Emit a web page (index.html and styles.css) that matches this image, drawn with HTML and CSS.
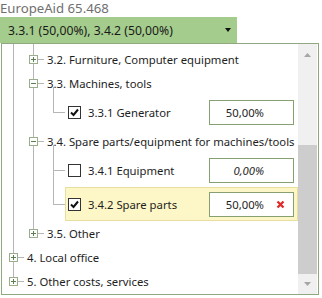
FILE: index.html
```html
<!DOCTYPE html>
<html lang="en">
<head>
  <meta charset="UTF-8">
  <title>Budget line picker</title>
  <link rel="stylesheet" href="styles.css">
</head>
<body>
  <div class="caption">EuropeAid 65.468</div>
  <div class="combo">
    <span>3.3.1 (50,00%), 3.4.2 (50,00%)</span>
    <span class="combo-arrow"></span>
  </div>

  <div class="panel">
    <div class="tree">
      <div class="branch b0">
        <div class="branch b1">
          <div class="row l1">
            <svg class="exp" width="9" height="9"><rect x=".5" y=".5" width="8" height="8"/><path d="M2 4.5h5M4.5 2v5"/></svg>
            <span class="conn"></span>
            <span>3.2. Furniture, Computer equipment</span>
          </div>
          <div class="row l1">
            <svg class="exp" width="9" height="9"><rect x=".5" y=".5" width="8" height="8"/><path d="M2 4.5h5"/></svg>
            <span class="conn"></span>
            <span>3.3. Machines, tools</span>
          </div>
          <div class="branch b2">
            <div class="leaf">
              <span class="conn2"></span>
              <div class="item">
                <span class="cb"><svg width="11" height="11"><path d="M2 5.5l2.5 2.5 4.5-5.5"/></svg></span>
                <span class="label">3.3.1 Generator</span>
                <div class="val"><span>50,00%</span><svg class="clear" width="9" height="9"><path d="M1.5 1.5l6 6M7.5 1.5l-6 6"/></svg></div>
              </div>
            </div>
          </div>
          <div class="row l1">
            <svg class="exp" width="9" height="9"><rect x=".5" y=".5" width="8" height="8"/><path d="M2 4.5h5"/></svg>
            <span class="conn"></span>
            <span>3.4. Spare parts/equipment for machines/tools</span>
          </div>
          <div class="branch b2">
            <div class="leaf">
              <span class="conn2"></span>
              <div class="item">
                <span class="cb"></span>
                <span class="label">3.4.1 Equipment</span>
                <div class="val empty"><span>0,00%</span><svg class="clear" width="9" height="9"><path d="M1.5 1.5l6 6M7.5 1.5l-6 6"/></svg></div>
              </div>
            </div>
            <div class="leaf">
              <span class="conn2"></span>
              <div class="item selected">
                <span class="cb"><svg width="11" height="11"><path d="M2 5.5l2.5 2.5 4.5-5.5"/></svg></span>
                <span class="label">3.4.2 Spare parts</span>
                <div class="val"><span>50,00%</span><svg class="clear" width="9" height="9"><path d="M1.5 1.5l6 6M7.5 1.5l-6 6"/></svg></div>
              </div>
            </div>
          </div>
          <div class="row l1">
            <svg class="exp" width="9" height="9"><rect x=".5" y=".5" width="8" height="8"/><path d="M2 4.5h5M4.5 2v5"/></svg>
            <span class="conn"></span>
            <span>3.5. Other</span>
          </div>
        </div>
        <div class="row l0">
          <svg class="exp" width="9" height="9"><rect x=".5" y=".5" width="8" height="8"/><path d="M2 4.5h5M4.5 2v5"/></svg>
          <span class="conn"></span>
          <span>4. Local office</span>
        </div>
        <div class="row l0">
          <svg class="exp" width="9" height="9"><rect x=".5" y=".5" width="8" height="8"/><path d="M2 4.5h5M4.5 2v5"/></svg>
          <span class="conn"></span>
          <span>5. Other costs, services</span>
        </div>
      </div>
    </div>

    <div class="scrollbar">
      <div class="sb-btn up"><svg width="7" height="4"><path d="M0 4L3.5 0 7 4z"/></svg></div>
      <div class="sb-space"></div>
      <div class="sb-thumb"></div>
      <div class="sb-btn down"><svg width="7" height="4"><path d="M0 0L7 0 3.5 4z"/></svg></div>
    </div>
  </div>
</body>
</html>
```

FILE: styles.css
```css
body {
  margin: 0;
  padding: 0;
  width: 322px;
  height: 298px;
  overflow: hidden;
  background-color: #fff;
  font-family: "Noto Sans", "Open Sans", sans-serif;
  color: #1e1e1e;
}

.caption {
  height: 17px;
  line-height: 16px;
  font-size: 13.2px;
  color: #6f6f6f;
}

.combo {
  width: 237px;
  height: 26px;
  box-sizing: border-box;
  padding: 0 6px 0 8px;
  display: flex;
  align-items: center;
  justify-content: space-between;
  background-color: #a4cc8c;
  font-size: 12.2px;
  color: #1a1a1a;
}

.combo-arrow {
  width: 0;
  height: 0;
  border-left: 3px solid transparent;
  border-right: 3px solid transparent;
  border-top: 4px solid #111;
}

.panel {
  margin-left: 1px;
  width: 318px;
  height: 252px;
  box-sizing: border-box;
  border: 1px solid #90a880;
  display: flex;
}

.tree {
  flex: 1;
  position: relative;
  overflow: hidden;
  padding-top: 3px;
  font-size: 11.3px;
}

.branch {
  position: relative;
}

.branch::before {
  content: "";
  position: absolute;
  width: 1px;
  background-color: #b6b6b6;
}

.b0::before {
  left: 11px;
  top: -3px;
  bottom: 12px;
}

.b1::before {
  left: 31px;
  top: -3px;
  bottom: 12px;
}

.b2::before {
  left: 51px;
  top: -8px;
  bottom: 17px;
}

.row {
  display: flex;
  align-items: center;
  height: 24px;
  white-space: nowrap;
}

.row.l0 {
  padding-left: 7px;
}

.row.l1 {
  padding-left: 27px;
}

.exp {
  display: block;
  position: relative;
  flex: none;
}

.exp rect {
  fill: #fff;
  stroke: #9aae8e;
}

.exp path {
  stroke: #5d7d52;
}

.conn {
  width: 6px;
  height: 1px;
  margin-right: 3px;
  background-color: #b6b6b6;
  flex: none;
}

.leaf {
  display: flex;
  align-items: center;
  height: 34px;
  padding-left: 51px;
}

.conn2 {
  width: 12px;
  height: 1px;
  background-color: #b6b6b6;
  flex: none;
}

.item {
  flex: 1;
  height: 34px;
  box-sizing: border-box;
  border: 1px solid transparent;
  padding: 0 3px 0 2px;
  display: flex;
  align-items: center;
  white-space: nowrap;
}

.item.selected {
  background-color: #fdf6c6;
  border-color: #e8de9f;
}

.cb {
  width: 13px;
  height: 13px;
  box-sizing: border-box;
  border: 1px solid #333;
  background-color: #fff;
  display: flex;
  align-items: center;
  justify-content: center;
  flex: none;
}

.cb path {
  fill: none;
  stroke: #111;
  stroke-width: 2;
}

.label {
  flex: 1;
  margin-left: 7px;
}

.val {
  width: 85px;
  height: 25px;
  box-sizing: border-box;
  border: 1px solid #86a072;
  background-color: #fff;
  display: flex;
  align-items: center;
  justify-content: flex-end;
  padding-right: 8px;
}

.val.empty span {
  font-style: italic;
}

.clear {
  margin-left: 12px;
  visibility: hidden;
}

.selected .clear {
  visibility: visible;
}

.clear path {
  stroke: #e02b2b;
  stroke-width: 2.3;
}

.scrollbar {
  width: 19px;
  margin-right: 1px;
  display: flex;
  flex-direction: column;
  background-color: #f0f0f0;
}

.sb-btn {
  display: flex;
  align-items: center;
  justify-content: center;
}

.sb-btn.up {
  height: 22px;
}

.sb-btn.down {
  flex: 1;
}

.sb-btn path {
  fill: #a6a6a6;
}

.sb-space {
  height: 79px;
}

.sb-thumb {
  height: 129px;
  background-color: #cdcdcd;
}
```
